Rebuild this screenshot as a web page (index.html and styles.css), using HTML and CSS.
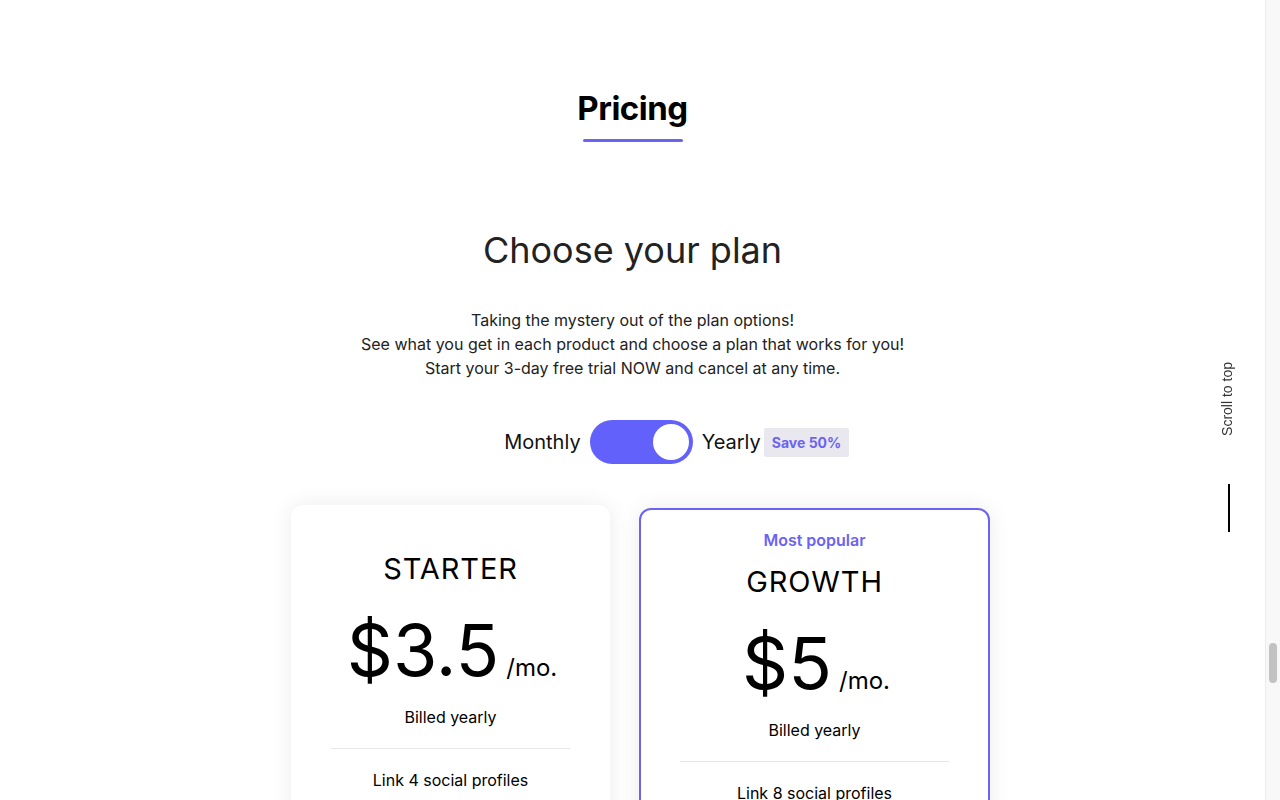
FILE: index.html
```html
<!DOCTYPE html>
<html lang="en">
<head>
<meta charset="utf-8">
<title>Pricing</title>
<link rel="stylesheet" href="styles.css">
</head>
<body>
<main class="page">
  <section class="pricing">
    <h1 class="section-title">Pricing</h1>
    <div class="title-bar"></div>
    <h2 class="plan-heading">Choose your plan</h2>
    <p class="intro">Taking the mystery out of the plan options!<br>See what you get in each product and choose a plan that works for you!<br>Start your 3-day free trial NOW and cancel at any time.</p>
    <div class="billing">
      <span class="billing-label">Monthly</span>
      <span class="switch"><span class="knob"></span></span>
      <span class="billing-label yearly">Yearly<span class="save">Save 50%</span></span>
    </div>
    <div class="cards">
      <div class="card">
        <div class="plan-name">STARTER</div>
        <div class="price"><span class="amount">$3.5</span><span class="per">/mo.</span></div>
        <div class="billed">Billed yearly</div>
        <hr class="divider">
        <ul class="features">
          <li>Link 4 social profiles</li>
          <li>100 scheduled posts</li>
          <li>Basic analytics</li>
        </ul>
      </div>
      <div class="card card-popular">
        <div class="popular">Most popular</div>
        <div class="plan-name">GROWTH</div>
        <div class="price"><span class="amount">$5</span><span class="per">/mo.</span></div>
        <div class="billed">Billed yearly</div>
        <hr class="divider">
        <ul class="features">
          <li>Link 8 social profiles</li>
          <li>Unlimited scheduled posts</li>
          <li>Advanced analytics</li>
        </ul>
      </div>
    </div>
  </section>
  <a class="scroll-top" href="#">
    <span class="scroll-text">Scroll to top</span>
    <span class="scroll-line"></span>
  </a>
</main>
<div class="scrollbar"><div class="thumb"></div></div>
</body>
</html>
```
FILE: styles.css
```css
html, body {
  margin: 0;
  padding: 0;
  height: 100%;
}
body {
  display: flex;
  overflow: hidden;
  background: #fff;
  font-family: Inter, "Noto Sans", "Liberation Sans", sans-serif;
  color: #000;
}
.page {
  flex: 1;
  min-width: 0;
  overflow: hidden;
}
.pricing {
  display: flex;
  flex-direction: column;
  align-items: center;
  padding-top: 88px;
}
.section-title {
  margin: 0;
  font-size: 33px;
  line-height: 41px;
  font-weight: 700;
  letter-spacing: -0.5px;
  color: #000;
}
.title-bar {
  width: 100px;
  height: 3px;
  margin-top: 10px;
  background: #6c63f2;
  border-radius: 2px;
}
.plan-heading {
  margin: 86px 0 0;
  font-size: 36px;
  line-height: 44px;
  font-weight: 400;
  color: #222;
}
.intro {
  margin: 36px 0 0;
  font-size: 16px;
  line-height: 24px;
  text-align: center;
  color: #222;
}
.billing {
  display: flex;
  align-items: center;
  margin-top: 40px;
  height: 44px;
}
.billing-label {
  font-size: 20px;
  line-height: 24px;
  color: #111;
}
.yearly {
  position: relative;
}
.switch {
  display: flex;
  justify-content: flex-end;
  align-items: center;
  box-sizing: border-box;
  width: 103px;
  height: 44px;
  padding: 4px;
  margin: 0 9px 0 9px;
  border-radius: 22px;
  background: #6361fb;
}
.knob {
  width: 36px;
  height: 36px;
  border-radius: 50%;
  background: #fff;
}
.save {
  position: absolute;
  left: 100%;
  top: -2px;
  margin-left: 3px;
  padding: 0 8px;
  height: 29px;
  line-height: 29px;
  font-size: 14px;
  font-weight: 700;
  color: #6c63f2;
  background: #e8e8ee;
  border-radius: 2px;
  white-space: nowrap;
}
.cards {
  display: flex;
  align-items: flex-start;
  gap: 29px;
  margin-top: 41px;
  margin-left: 16px;
}
.card {
  box-sizing: border-box;
  width: 319px;
  padding: 47px 40px 40px;
  border-radius: 12px;
  background: #fff;
  box-shadow: 0 0 22px rgba(0, 0, 0, 0.08);
  text-align: center;
}
.card-popular {
  width: 351px;
  margin-top: 3px;
  padding: 18px 39px 40px;
  border: 2px solid #6c63f2;
}
.popular {
  font-size: 16px;
  line-height: 24px;
  font-weight: 600;
  color: #6c63f2;
  margin-bottom: 13px;
}
.plan-name {
  font-size: 29px;
  line-height: 34px;
  font-weight: 400;
  letter-spacing: 0.9px;
}
.price {
  display: flex;
  justify-content: center;
  align-items: baseline;
  gap: 7px;
  margin-top: 30px;
  margin-left: 3px;
}
.amount {
  font-size: 72px;
  line-height: 68px;
  font-weight: 400;
}
.per {
  font-size: 24px;
  line-height: 24px;
}
.billed {
  margin-top: 21px;
  font-size: 16px;
  line-height: 24px;
}
.divider {
  margin: 19px 0 0;
  border: 0;
  height: 1px;
  background: #e6e6e6;
}
.features {
  list-style: none;
  margin: 19px 0 0;
  padding: 0;
}
.features li {
  font-size: 16px;
  line-height: 24px;
  margin-bottom: 16px;
}
.scroll-top {
  position: fixed;
  top: 362px;
  left: 1217px;
  width: 22px;
  display: flex;
  flex-direction: column;
  align-items: center;
  gap: 48px;
  text-decoration: none;
  color: #333;
}
.scroll-text {
  writing-mode: vertical-rl;
  transform: rotate(180deg);
  font-family: "Liberation Sans", Arial, sans-serif;
  font-size: 14px;
  line-height: 16px;
  white-space: nowrap;
  margin-left: -2px;
}
.scroll-line {
  width: 2px;
  height: 48px;
  background: #000;
  margin-left: 1px;
}
.scrollbar {
  flex: 0 0 15px;
  box-sizing: border-box;
  height: 100%;
  background: #f8f8f8;
  border-left: 1px solid #ececec;
  padding: 643px 3px 0 3px;
}
.thumb {
  width: 8px;
  height: 40px;
  border-radius: 4px;
  background: #c2c2c2;
}
```
